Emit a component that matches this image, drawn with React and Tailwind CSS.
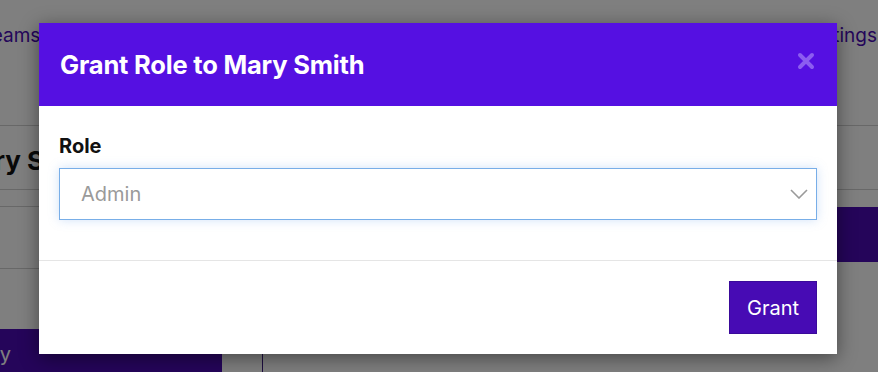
import React from "react";

const App = () => {
  return (
    <div className="relative w-[878px] h-[372px] overflow-hidden bg-white font-['Inter',sans-serif]">
      {/* page behind the dialog */}
      <div className="flex flex-col">
        <nav className="h-[126px] border-b border-[#d0d0d0] flex justify-between items-start pt-[22px] text-[19px] text-[#4a0bb5]">
          <span className="-ml-[19px]">Teams</span>
          <span className="mr-[1px]">Settings</span>
        </nav>
        <div className="flex">
          <aside className="w-[263px] border-r border-[#3a1a80] flex flex-col">
            <h2 className="h-[64px] pt-[6px] border-b border-[#d0d0d0] flex items-center -ml-[45px] text-[26px] font-bold text-[#111] whitespace-nowrap">Mary Smith</h2>
            <div className="h-[17px] border-b border-[#d0d0d0]" />
            <div className="h-[62px] border-b border-[#d0d0d0]" />
            <div className="h-[60px]" />
            <div className="w-[222px] h-[50px] bg-[#4a0bb5] text-white text-[20px] flex items-center pl-[10px]">
              <span className="-ml-[70px]">Activity</span>
            </div>
          </aside>
          <main className="flex-1 flex flex-col">
            <div className="h-[64px] border-b border-[#d0d0d0]" />
            <div className="h-[17px]" />
            <div className="flex justify-end">
              <div className="w-[120px] h-[55px] bg-[#4a0bb5] -mr-[60px]" />
            </div>
          </main>
        </div>
      </div>

      {/* overlay */}
      <div className="absolute inset-0 bg-black/50">
        <div className="absolute left-[39px] top-[23px] w-[798px] bg-white shadow-[0_4px_18px_rgba(0,0,0,0.45)]">
          <header className="h-[83px] bg-[#5510e2] flex items-center justify-between pl-[21px] pr-[22px]">
            <h1 className="text-white text-[25.5px] font-bold tracking-[-0.2px] mt-[2px]">Grant Role to Mary Smith</h1>
            <button className="text-[#8c5df0] -mt-[8px]">
              <svg width="18" height="18" viewBox="0 0 18 18">
                <path d="M3 3 L15 15 M15 3 L3 15" stroke="currentColor" strokeWidth="4" strokeLinecap="round" />
              </svg>
            </button>
          </header>
          <div className="px-[20px] pt-[27px] pb-[40px] border-b border-[#e5e5e5]">
            <label className="block text-[20px] font-bold text-[#111] leading-[26px] mb-[9px]">Role</label>
            <div className="h-[52px] border border-[#78aee8] shadow-[0_0_10px_rgba(120,170,235,0.35)] flex items-center justify-between pl-[21px] pr-[8px]">
              <span className="text-[20px] text-[#9a9a9a]">Admin</span>
              <svg width="18" height="10" viewBox="0 0 18 10">
                <path d="M1 1 L9 9 L17 1" fill="none" stroke="#9a9a9a" strokeWidth="1.6" />
              </svg>
            </div>
          </div>
          <footer className="flex justify-end px-[20px] pt-[20px] pb-[20px]">
            <button className="w-[88px] h-[53px] bg-[#470bb4] text-white text-[20px] border border-[#3a0a9a]">Grant</button>
          </footer>
        </div>
      </div>
    </div>
  );
};

export default App;
